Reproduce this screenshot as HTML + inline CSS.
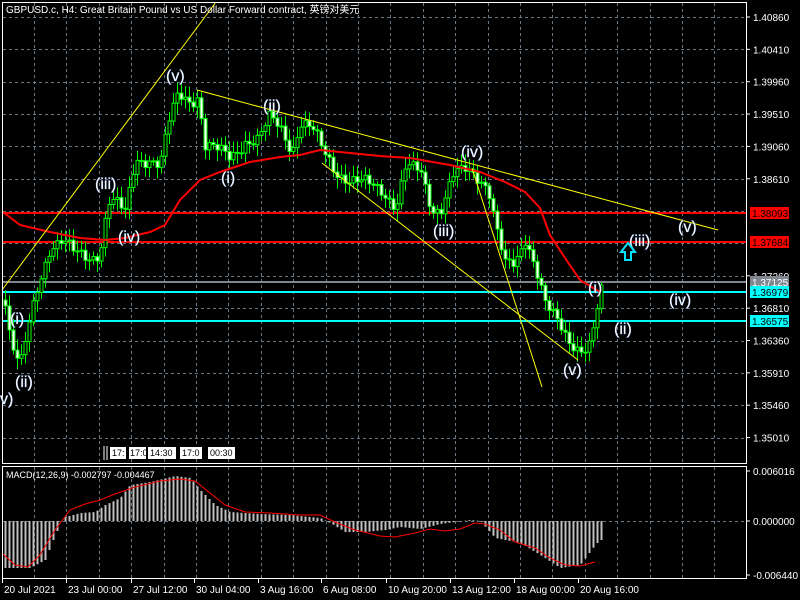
<!DOCTYPE html>
<html><head><meta charset="utf-8">
<style>
html,body{margin:0;padding:0;background:#000;width:800px;height:600px;overflow:hidden}
svg{display:block}
text{font-family:"Liberation Sans","Noto Sans CJK SC",sans-serif}
</style></head><body>
<svg id="s" width="800" height="600" xmlns="http://www.w3.org/2000/svg">
<rect width="800" height="600" fill="#000"/>
<g id="grid" stroke="#6a7784" stroke-dasharray="3,3" stroke-width="1"></g>
<g id="hl"></g>
<g id="candles"></g>
<g id="ma"></g>
<g stroke="#ffff00" stroke-width="1" fill="none">
<line x1="2" y1="290" x2="216" y2="2"/>
<line x1="197" y1="90" x2="718" y2="230"/>
<line x1="322" y1="163" x2="578" y2="360"/>
<line x1="472" y1="168" x2="542" y2="387"/>
</g>
<g id="macd"></g>
<g fill="none" stroke="#fff" stroke-width="1">
<rect x="2.5" y="2.5" width="744" height="461"/>
<rect x="2.5" y="466.5" width="744" height="112"/>
</g>
<g id="axis" fill="#fff" font-size="10"></g>
<g font-size="16" fill="#fff" stroke="#3a5fa0" stroke-width="0.6" paint-order="stroke" id="wl"></g>
<path d="M628 243 L621 252 L625 252 L625 260 L631 260 L631 252 L635 252 Z" fill="none" stroke="#00e5ff" stroke-width="2"/>
<text x="6" y="13" fill="#fff" font-size="10">GBPUSD.c, H4:  Great Britain Pound vs US Dollar Forward contract, 英镑对美元</text>
<text x="6" y="478" fill="#fff" font-size="9">MACD(12,26,9) -0.002797 -0.004467</text>
<g font-size="9" fill="#000">
<line x1="104" y1="446" x2="104" y2="460" stroke="#fff"/><line x1="107" y1="446" x2="107" y2="460" stroke="#fff"/>
<rect x="110" y="447" width="16" height="12" fill="#fff"/><text x="112" y="456">17:</text>
<rect x="129" y="447" width="17" height="12" fill="#fff"/><text x="130" y="456">17:0</text>
<rect x="148" y="447" width="28" height="12" fill="#fff"/><text x="150" y="456">14:30</text>
<rect x="180" y="447" width="22" height="12" fill="#fff"/><text x="182" y="456">17:0</text>
<rect x="208" y="447" width="27" height="12" fill="#fff"/><text x="210" y="456">00:30</text>
</g>
</svg>
<script>
const NS="http://www.w3.org/2000/svg";
function el(p,t,a,txt){const e=document.createElementNS(NS,t);for(const k in a)e.setAttribute(k,a[k]);if(txt!=null)e.textContent=txt;document.getElementById(p).appendChild(e);return e;}
for(let x=34;x<746;x+=32.4)el("grid","line",{x1:Math.round(x)+.5,y1:3,x2:Math.round(x)+.5,y2:463});
for(let x=34;x<746;x+=32.4)el("grid","line",{x1:Math.round(x)+.5,y1:467,x2:Math.round(x)+.5,y2:578});
for(let y=17;y<463;y+=32.35)el("grid","line",{x1:3,y1:Math.round(y)+.5,x2:746,y2:Math.round(y)+.5});
el("grid","line",{x1:3,y1:521.5,x2:746,y2:521.5});
const pr=["1.40860","1.40410","1.39960","1.39510","1.39060","1.38610","1.38160","1.37710","1.37260","1.36810","1.36360","1.35910","1.35460","1.35010"];
pr.forEach((p,i)=>{const y=17+i*32.35;if(i==6||i==7)return;el("axis","line",{x1:746,y1:y,x2:750,y2:y,stroke:"#fff"});el("axis","text",{x:753,y:y+4},p);});
[["0.006016",471],["0.000000",521],["-0.006440",575]].forEach(a=>{el("axis","line",{x1:746,y1:a[1],x2:750,y2:a[1],stroke:"#fff"});el("axis","text",{x:753,y:a[1]+4},a[0]);});
[["20 Jul 2021",2],["23 Jul 00:00",66],["27 Jul 12:00",131],["30 Jul 04:00",194],["3 Aug 16:00",258],["6 Aug 08:00",321],["10 Aug 20:00",386],["13 Aug 12:00",450],["18 Aug 00:00",514],["20 Aug 16:00",578]].forEach(a=>{el("axis","text",{x:a[1]+2,y:593},a[0]);el("axis","line",{x1:a[1]+.5,y1:579,x2:a[1]+.5,y2:583,stroke:"#fff"});});
[[213,"#ff0000","1.38093","#ff0000","#000"],[242,"#ff0000","1.37684","#ff0000","#000"],[282,"#7f8790","1.37125","#7f8790","#fff"],[292,"#00ffff","1.36979","#00ffff","#000"],[321,"#00ffff","1.36575","#00ffff","#000"]].forEach(h=>{
 el("hl","line",{x1:3,y1:h[0],x2:746,y2:h[0],stroke:h[1],"stroke-width":2});
 el("axis","rect",{x:750,y:h[0]-6,width:39,height:12,fill:h[3]});
 el("axis","text",{x:752,y:h[0]+4,fill:h[4]},h[2]);
});
const P=[[5,300],[10,340],[20,368],[30,320],[38,285],[50,245],[62,240],[75,255],[90,258],[100,250],[108,200],[118,205],[125,215],[135,160],[150,158],[160,165],[168,125],[178,95],[190,100],[198,95],[205,145],[215,150],[230,158],[245,140],[258,140],[270,118],[282,130],[292,150],[300,122],[312,130],[322,150],[335,170],[350,180],[368,185],[382,190],[396,205],[405,168],[420,172],[432,210],[442,205],[452,175],[465,172],[478,178],[488,185],[497,230],[505,265],[515,268],[525,240],[535,262],[545,300],[555,320],[568,345],[580,348],[590,340],[600,292]];
function interp(A,x){for(let i=0;i<A.length-1;i++){if(x>=A[i][0]&&x<=A[i+1][0]){const t=(x-A[i][0])/(A[i+1][0]-A[i][0]);return A[i][1]+t*(A[i+1][1]-A[i][1]);}}return A[A.length-1][1];}
let prev=interp(P,5);
for(let x=5;x<=601;x+=4){
 const n=Math.sin(x*1.7)*5+Math.sin(x*0.53)*4;
 const c=interp(P,x)+n, o=prev;
 const hi=Math.min(o,c)-3-Math.abs(Math.sin(x*2.3))*8, lo=Math.max(o,c)+3+Math.abs(Math.cos(x*1.1))*8;
 el("candles","line",{x1:x+.5,y1:hi,x2:x+.5,y2:lo,stroke:"#00ff00"});
 const top=Math.min(o,c),bh=Math.max(1,Math.abs(o-c));
 el("candles","rect",{x:x-1,y:top,width:3,height:bh,fill:c<o?"#000":"#fff",stroke:"#00ff00","stroke-width":1});
 prev=c;
}
const M=[[3,212],[20,225],[50,232],[80,238],[105,240],[125,238],[150,232],[165,225],[180,200],[200,180],[220,172],[250,162],[280,157],[300,155],[320,150],[350,153],[380,156],[410,158],[450,165],[480,172],[505,182],[525,192],[540,208],[550,235],[565,258],[580,280],[600,292]];
el("ma","polyline",{points:M.map(p=>p.join(",")).join(" "),fill:"none",stroke:"#ff0000","stroke-width":2});
const H=[[5,568],[30,568],[45,560],[55,535],[60,525],[62,518],[80,513],[95,512],[105,505],[120,498],[130,485],[150,482],[175,476],[190,478],[200,490],[215,505],[230,512],[260,514],[290,515],[320,518],[330,523],[345,532],[365,532],[385,530],[400,527],[420,529],[440,524],[470,520],[480,521],[495,538],[520,543],[540,555],[560,568],[580,565],[595,545],[600,540]];
for(let x=5;x<=601;x+=4){const y=interp(H,x);el("macd","line",{x1:x+.5,y1:521,x2:x+.5,y2:y,stroke:"#c0c0c0","stroke-width":2});}
const S=[[3,554],[15,565],[28,567],[40,555],[55,530],[70,510],[85,504],[100,500],[115,494],[135,487],[160,481],[180,479],[195,481],[210,493],[225,505],[245,512],[270,513],[300,515],[320,515],[335,522],[355,530],[380,536],[395,537],[415,533],[430,529],[445,531],[460,529],[475,523],[485,524],[500,530],[515,542],[535,548],[550,558],[565,565],[580,566],[595,562]];
el("macd","polyline",{points:S.map(p=>p.join(",")).join(" "),fill:"none",stroke:"#ff0000","stroke-width":1});
[["(v)",166,81],["(ii)",263,111],["(iii)",95,189],["(i)",221,183],["(iv)",118,242],["(iv)",461,157],["(iii)",433,236],["(v)",678,232],["(iii)",629,246],["(iv)",669,305],["(i)",588,293],["(ii)",614,334],["(v)",563,375],["(i)",10,324],["(ii)",15,387],["v)",0,404]].forEach(a=>el("wl","text",{x:a[1],y:a[2]},a[0]));
</script>
</body></html>
